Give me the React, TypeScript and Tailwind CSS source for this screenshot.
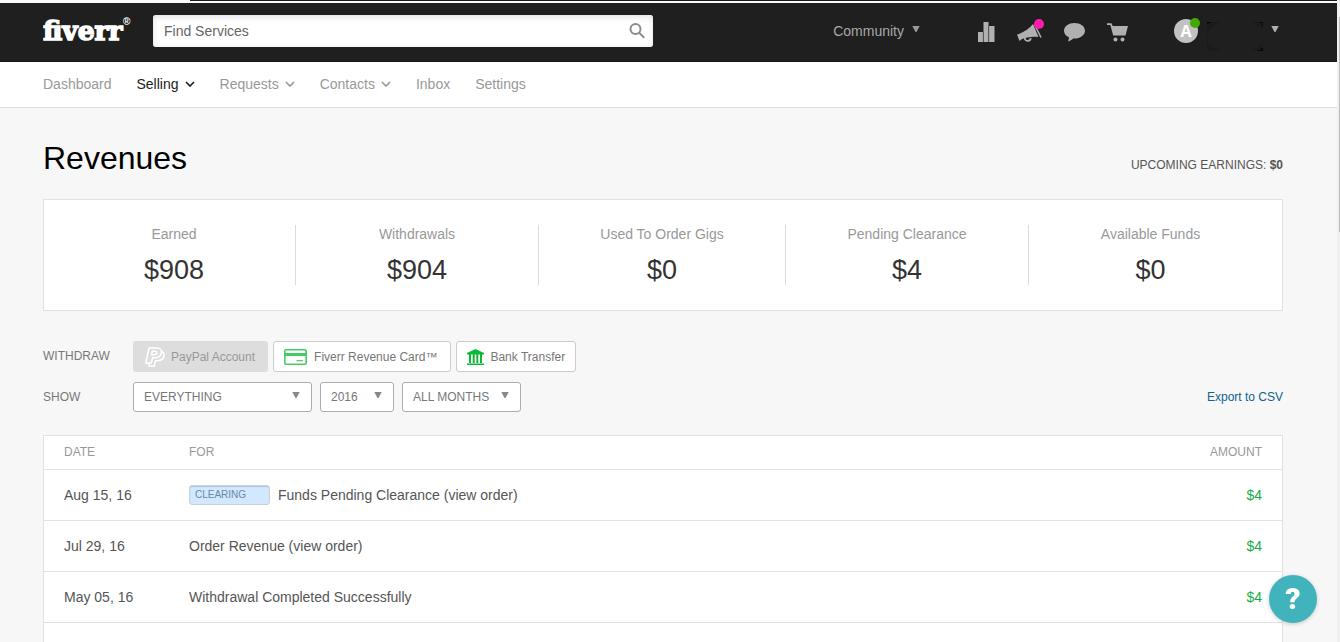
import React, { useState } from "react";

const stats = [
  { label: "Earned", value: "$908" },
  { label: "Withdrawals", value: "$904" },
  { label: "Used To Order Gigs", value: "$0" },
  { label: "Pending Clearance", value: "$4" },
  { label: "Available Funds", value: "$0" },
];

const navLinks = [
  { label: "Dashboard", menu: false, active: false },
  { label: "Selling", menu: true, active: true },
  { label: "Requests", menu: true, active: false },
  { label: "Contacts", menu: true, active: false },
  { label: "Inbox", menu: false, active: false },
  { label: "Settings", menu: false, active: false },
];

const rows = [
  { date: "Aug 15, 16", text: "Funds Pending Clearance (view order)", clearing: true, amount: "$4" },
  { date: "Jul 29, 16", text: "Order Revenue (view order)", clearing: false, amount: "$4" },
  { date: "May 05, 16", text: "Withdrawal Completed Successfully", clearing: false, amount: "$4" },
];

function Caret({ className = "" }: { className?: string }) {
  return (
    <svg width="8" height="6" viewBox="0 0 8 6" fill="currentColor" className={className} aria-hidden="true">
      <path d="M0.300 0h7.400L4.500 6h-1z" />
    </svg>
  );
}

function Chevron() {
  return (
    <svg width="10" height="6" viewBox="0 0 10 6" fill="none" stroke="currentColor" strokeWidth="1.7" aria-hidden="true">
      <path d="M1 1l4 4 4-4" />
    </svg>
  );
}

function Logo() {
  return (
    <a href="#" aria-label="Fiverr" className="block w-[90px] shrink-0 text-white">
      <svg width="90" height="32" viewBox="0 0 90 32" className="block" fill="currentColor">
        <text x="0" y="25" fontFamily="'DejaVu Serif', serif" fontWeight="700" fontSize="26.500" stroke="currentColor" strokeWidth="1.500">
          fiverr
        </text>
        <text x="80" y="10" fontFamily="'Liberation Sans', sans-serif" fontWeight="700" fontSize="10">
          ®
        </text>
      </svg>
    </a>
  );
}

function FilterSelect({
  label,
  options,
  className,
}: {
  label: string;
  options: string[];
  className: string;
}) {
  const [value, setValue] = useState(options[0]);

  return (
    <div className={`relative ${className}`}>
      <select
        aria-label={label}
        value={value}
        onChange={(e) => setValue(e.target.value)}
        className="block h-[30px] w-full appearance-none rounded-[3px] border border-[#adadad] bg-white px-2.5 text-xs text-[#777]"
      >
        {options.map((o) => (
          <option key={o}>{o}</option>
        ))}
      </select>
      <Caret className="pointer-events-none absolute right-3 top-2.5 text-[#888]" />
    </div>
  );
}

function Header() {
  return (
    <header className="flex h-[59px] items-start border-b border-[#161416] bg-[#1f1f1f] pl-[43px] pr-[58px] pt-3">
      <Logo />
      <form className="relative ml-5 w-[500px]" onSubmit={(e) => e.preventDefault()}>
        <input
          type="text"
          aria-label="Find Services"
          placeholder="Find Services"
          className="block h-8 w-full rounded-[3px] bg-white px-[11px] text-sm text-[#555] shadow-[inset_0_2px_6px_#e4dfe4] placeholder:text-[#666]"
        />
        <button type="submit" aria-label="Search" className="absolute right-2 top-2 text-[#8c8c8c]">
          <svg width="16" height="16" viewBox="0 0 16 16" fill="none" stroke="currentColor" strokeWidth="2" className="block">
            <circle cx="6.5" cy="6" r="5" />
            <path d="M10.2 9.7l5 5" />
          </svg>
        </button>
      </form>
      <div className="ml-auto flex items-start text-[#b0b0b0]">
        <button className="mr-[57px] flex h-8 items-center text-sm text-[#a8a8a8]">
          Community
          <Caret className="mb-1 ml-2 text-[#999]" />
        </button>
        <div className="flex h-8 items-center gap-[22px] pt-0.5">
          <a href="#" aria-label="Analytics">
            <svg width="18" height="20" viewBox="0 0 18 20" fill="currentColor" className="block">
              <path d="M1 10h5v10H1zM6.500 0h5v20h-5zM12 4h5.500v16H12z" />
              <path d="M6.200 10v10M11.800 4v16" stroke="#1f1f1f" strokeOpacity="0.500" strokeWidth="0.600" />
            </svg>
          </a>
          <a href="#" aria-label="Announcements" className="relative">
            <svg width="25" height="20" viewBox="0 0 25 20" fill="currentColor" className="block">
              <path d="M0 12.500l1.500-.3C8 9.500 12.500 6.500 16 2l5.500 13C15.500 14.200 9 15.200 4.200 17.500L2.500 19z" />
              <path d="M17.500 2.500l6.500 13" fill="none" stroke="currentColor" strokeWidth="1.500" />
              <path d="M7.800 15.500c-.5 4.500 5.500 4.300 6 .6" fill="none" stroke="currentColor" strokeWidth="1.800" />
            </svg>
            <span className="absolute -right-0.5 -top-[3px] size-2.5 rounded-full bg-[#ff1aa9]" />
          </a>
          <a href="#" aria-label="Messages">
            <svg width="21" height="20" viewBox="0 0 21 20" fill="currentColor" className="block">
              <path d="M10.500 1C4.700 1 0 4.400 0 8.700c0 3 2 5.300 5 6.600-.1 1.700-.4 3-1 4.200 2-.6 3.900-1.700 5.200-3.100l1.300.1C16.300 16.500 21 13 21 8.700S16.300 1 10.500 1z" />
            </svg>
          </a>
          <a href="#" aria-label="Cart">
            <svg width="21" height="20" viewBox="0 0 21 20" fill="currentColor" className="block">
              <path d="M0 1.200h4.500L5.700 4H21l-2.500 9.500H6.200L3.300 3H0z" />
              <circle cx="8.500" cy="17.500" r="2" />
              <circle cx="15.500" cy="17.500" r="2" />
            </svg>
          </a>
        </div>
        <button aria-label="Account" className="ml-[46px] flex h-8 items-center">
          <span className="relative flex size-6 items-center justify-center rounded-full bg-[#c2c2c2] font-['Open_Sans',sans-serif] text-base font-bold text-white">
            A
            <span className="absolute -right-0.5 -top-px size-2.5 rounded-full bg-[#42ab00]" />
          </span>
          <svg width="56" height="29" viewBox="0 0 56 29" className="ml-[9px] mt-2.5 shrink-0" aria-hidden="true">
            <path d="M0 0h56v29H0z" fill="#1b1b1b" />
            <ellipse cx="29" cy="14.500" rx="29" ry="17" fill="#1f1f1f" />
            <path d="M0 0h5v1H2v1H0zM52 0h4v4h-1V1h-3zM56 26v3h-5v-1h3v-2z" fill="#080808" />
          </svg>
          <Caret className="mb-1 ml-2" />
        </button>
      </div>
    </header>
  );
}

export default function App() {
  return (
    <div className="flex h-screen overflow-hidden bg-[#f7f7f7] font-['Liberation_Sans',Arial,sans-serif] text-sm text-[#555]">
      <div className="flex min-w-0 flex-1 flex-col">
        <div className="h-[3px] shrink-0 bg-[#fafafa]">
          <div className="ml-[190px] h-px bg-[#1c181c]" />
        </div>
        <Header />

        <nav className="flex h-[46px] shrink-0 items-center gap-[25px] border-b border-[#dedede] bg-white pb-0.5 pl-[43px]">
          {navLinks.map((link) => (
            <a
              key={link.label}
              href="#"
              className={`flex items-center gap-1.5 ${link.active ? "text-[#222]" : "text-[#999]"}`}
            >
              {link.label}
              {link.menu && <Chevron />}
            </a>
          ))}
        </nav>

        <main className="flex flex-1 flex-col pl-[43px] pr-[54px]">
          <div className="flex items-center justify-between pt-[30px]">
            <h1 className="text-[32px] leading-10 text-black">Revenues</h1>
            <p className="pt-3.5 text-xs">
              UPCOMING EARNINGS: <b>$0</b>
            </p>
          </div>

          {/* Totals */}
          <section className="mt-[21px] grid grid-cols-[1fr_1fr_247px_1fr_1fr] border border-[#e2e2e2] bg-white py-[25px] pl-[9px] pr-2.5">
            {stats.map((s) => (
              <div key={s.label} className="h-[60px] border-r border-[#dcdcdc] text-center last:border-r-0">
                <div className="leading-[18px] text-[#999]">{s.label}</div>
                <div className="mt-[9px] text-[27px] leading-9 text-[#333]">{s.value}</div>
              </div>
            ))}
          </section>

          {/* Withdraw options */}
          <div className="mt-[30px] flex items-center text-xs text-[#777]">
            <span className="w-[90px] pb-0.5">WITHDRAW</span>
            <div className="flex gap-[5px]">
              <button disabled className="flex h-[31px] items-center rounded-[3px] bg-[#ddd] pl-3 pr-[13px] text-[#999]">
                <svg width="20" height="20" viewBox="0 0 20 20" fill="none" stroke="white" strokeWidth="1.500" strokeLinejoin="round" className="mr-1.5">
                  <path d="M4 1h8c3.500 0 5 2 4.300 5-.8 3.500-3 4.800-6.500 4.800H7.500L6.300 16H.8z" />
                  <path d="M7.300 4.300h2.900c1.400 0 1.900.6 1.600 1.700-.3 1.300-1.100 1.800-2.700 1.800H6.500z" />
                  <path d="M16.500 4.500c2.200.8 3 2.400 2.500 4.500-.8 3.300-3 4.700-6.400 4.700h-2.100L9.300 19H4l.6-3" />
                </svg>
                PayPal Account
              </button>
              <button className="flex h-[31px] items-center rounded-[3px] border border-[#ccc] bg-white pl-2.5 pr-[13px]">
                <svg width="23" height="16" viewBox="0 0 23 16" fill="none" stroke="#45cb65" className="mr-[7px]">
                  <rect x="0.800" y="0.800" width="21.400" height="14.400" rx="1.200" strokeWidth="1.600" />
                  <path d="M1 5.500h21" strokeWidth="3" />
                  <path d="M12.500 11.700h6.500" strokeWidth="1.200" />
                </svg>
                Fiverr Revenue Card™
              </button>
              <button className="flex h-[31px] items-center rounded-[3px] border border-[#ccc] bg-white px-2.5">
                <svg width="17" height="16" viewBox="0 0 17 16" fill="#0cb835" className="mr-1.5">
                  <path d="M8.500 0L17 4v1.500H0V4zM2 5.500h2V14H2zM5.700 5.500h2V14h-2zM9.300 5.500h2V14h-2zM13 5.500h2V14h-2zM0 14.500h17V16H0z" />
                </svg>
                Bank Transfer
              </button>
            </div>
          </div>

          {/* Filters */}
          <div className="mt-2.5 flex items-center text-xs text-[#777]">
            <span className="w-[90px]">SHOW</span>
            <div className="flex gap-2">
              <FilterSelect label="Show" options={["EVERYTHING"]} className="w-[179px]" />
              <FilterSelect label="Year" options={["2016", "2015"]} className="w-[74px]" />
              <FilterSelect label="Month" options={["ALL MONTHS"]} className="w-[119px]" />
            </div>
            <a href="#" className="ml-auto text-[#0e6390]">
              Export to CSV
            </a>
          </div>

          <section className="mt-[23px] flex-1 border border-b-0 border-[#e2e2e2] bg-white">
            <table className="w-full border-collapse text-left">
              <thead>
                <tr className="h-[33px] border-b border-[#e2e2e2] text-xs text-[#999]">
                  <th className="w-[145px] pl-5 font-normal">DATE</th>
                  <th className="font-normal">FOR</th>
                  <th className="pr-5 text-right font-normal">AMOUNT</th>
                </tr>
              </thead>
              <tbody>
                {rows.map((row) => (
                  <tr key={row.date} className="h-[51px] border-b border-[#e2e2e2]">
                    <td className="pl-5">{row.date}</td>
                    <td>
                      <div className="flex items-center gap-2">
                        {row.clearing && (
                          <span className="h-5 w-[81px] rounded-[3px] border border-[#c9d3dc] bg-[#d1e8ff] pl-[5px] text-[10px] leading-[17px] text-[#6788a5] shadow-[inset_0_1px_1px_#abc4dc]">
                            CLEARING
                          </span>
                        )}
                        {row.text}
                      </div>
                    </td>
                    <td className="pr-5 text-right text-[#17ad49]">{row.amount}</td>
                  </tr>
                ))}
              </tbody>
            </table>
          </section>
        </main>
      </div>

      {/* Scroll track */}
      <div className="flex w-[3px] shrink-0 justify-end bg-[#f0f0f0] pt-[17px]">
        <div className="h-[215px] w-px bg-[#bdbdbd]" />
      </div>

      <button
        aria-label="Help"
        className="fixed bottom-[19px] right-[23px] flex size-12 items-center justify-center rounded-full bg-[#41b3bd] font-['Roboto',sans-serif] text-[30px] font-black text-white shadow-[0_1px_4px_rgba(0,0,0,0.2)]"
      >
        ?
      </button>
    </div>
  );
}
